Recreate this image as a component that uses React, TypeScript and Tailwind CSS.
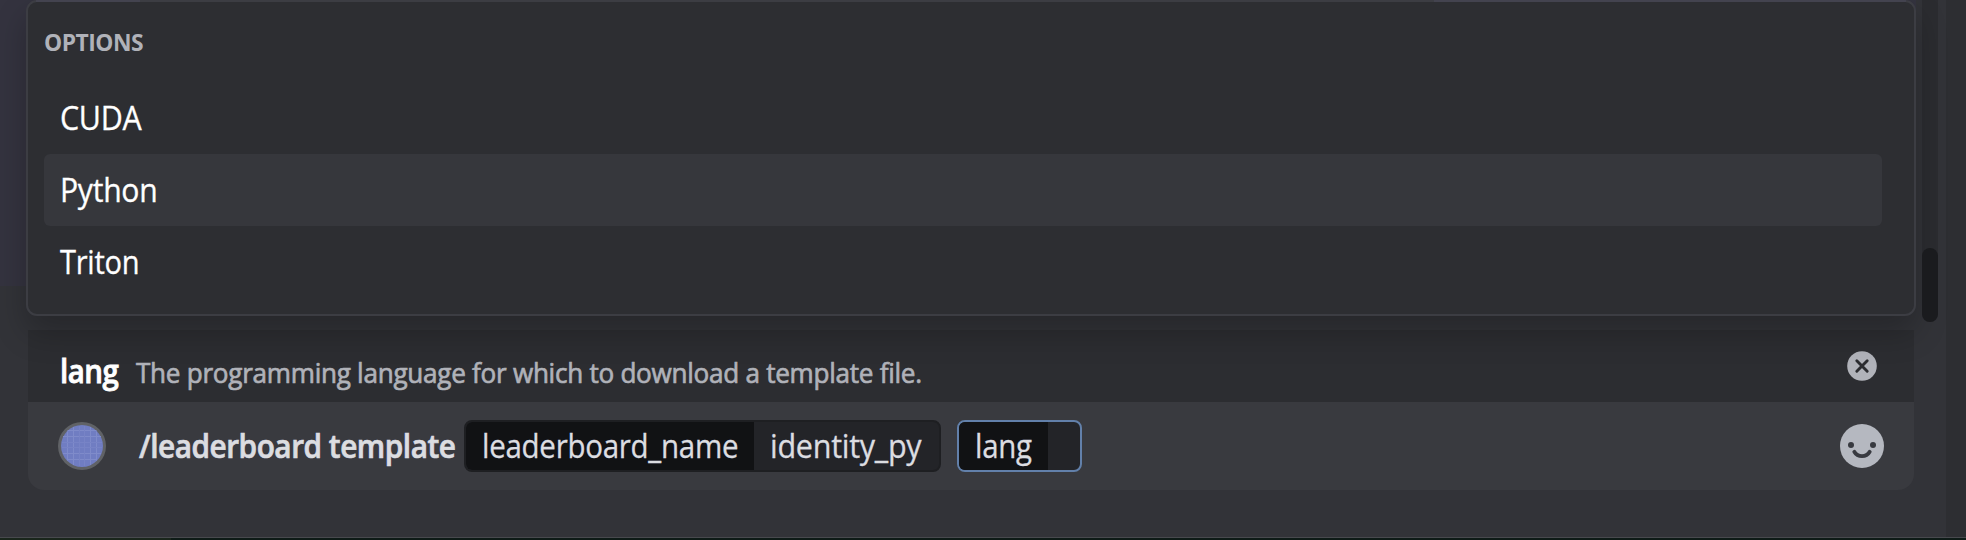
const options = [
  { name: "CUDA", text: "scale-x-[0.95]", row: "" },
  { name: "Python", text: "scale-x-[0.942]", row: "bg-[#36373c]" },
  { name: "Triton", text: "scale-x-[0.908]", row: "" },
];

function CloseIcon() {
  return (
    <svg width="30" height="30" viewBox="0 0 30 30" className="block">
      <circle cx="15" cy="15" r="14.8" fill="#b1b3ba" />
      <path d="M9.8 9.8 20.2 20.2M20.2 9.8 9.8 20.2" stroke="#2c2d31" strokeWidth="2.9" strokeLinecap="round" />
    </svg>
  );
}

function SmileIcon() {
  return (
    <svg width="44" height="44" viewBox="0 0 44 44" className="block">
      <circle cx="22" cy="22" r="22" fill="#b5b8c0" />
      <circle cx="11" cy="21" r="3" fill="#383a40" />
      <circle cx="33" cy="21" r="3" fill="#383a40" />
      <path d="M14.3 27.8C17.6 33.6 26.4 33.6 29.7 27.8" fill="none" stroke="#383a40" strokeWidth="3.8" strokeLinecap="round" />
    </svg>
  );
}

function Avatar() {
  return (
    <svg width="48" height="48" viewBox="0 0 48 48" className="block shrink-0">
      <circle cx="24" cy="24" r="24" fill="#606266" />
      <circle cx="24" cy="24" r="21" fill="#707dc2" />
      <path
        d="M9.5 9.5V38.5M15.5 5V43M32.5 5V43M38.5 9.5V38.5M9.5 8.5H38.5M5 14.5H43M5 31.5H43M9.5 37.5H38.5"
        stroke="#7f8bca"
        strokeWidth="1"
      />
      <path d="M21.5 4V44M26.5 4V44M4 20.5H44M4 25.5H44" stroke="#7783c6" strokeWidth="1" />
    </svg>
  );
}

function OptionList() {
  return (
    <div className="relative z-10 ml-[26px] h-[316px] w-[1890px] rounded-[11px] border-2 border-[#3c3d43] bg-[#2d2e32] pt-[25px] pl-4 shadow-[0_16px_32px_rgba(0,0,0,0.24)]">
      <div className="absolute -top-0.5 left-2 h-0.5 w-[104px] bg-[#43434f]" />
      <div className="absolute -top-0.5 right-2 h-0.5 w-[472px] bg-[#43434f]" />
      <div className="h-[55px] text-[24px] leading-[30px] font-bold tracking-[-0.5px] text-[#b0b2b9]">
        <span className="inline-block origin-left scale-x-[0.95]">OPTIONS</span>
      </div>
      <ul className="text-[32px] leading-10 tracking-[-0.3px] text-white">
        {options.map((o) => (
          <li key={o.name} className={`flex h-[72px] w-[1838px] items-center rounded-md pl-4 ${o.row}`}>
            <span className={`inline-block origin-left [-webkit-text-stroke:0.3px_currentColor] ${o.text}`}>{o.name}</span>
          </li>
        ))}
      </ul>
    </div>
  );
}

export default function App() {
  return (
    <div className="flex h-[540px] w-[1966px] flex-col overflow-hidden bg-[#323338] font-['Open_Sans',sans-serif] whitespace-nowrap">
      <div className="flex h-[537px]">
        <div className="relative w-[1946px]">
          <div className="absolute top-0 left-0 h-[286px] w-[1916px] bg-[#34333f]" />
          <div className="absolute top-0 left-[1922px] h-[322px] w-4 rounded-b-lg bg-[#2b2c30]" />
          <OptionList />
          <div className="absolute top-[248px] left-[1922px] z-20 h-[74px] w-4 rounded-full bg-[#1a1b1e]" />
          <div className="mt-[14px] ml-7 flex h-[72px] w-[1886px] items-center bg-[#2c2d31] pr-[37px] pl-8">
            <span className="w-[76px] pt-[10px] text-[32px] font-semibold tracking-[-0.5px] text-white">
              <span className="inline-block origin-left scale-x-[0.92] [-webkit-text-stroke:0.8px_currentColor]">lang</span>
            </span>
            <span className="grow pt-[12px] text-[28px] tracking-[-0.3px] text-[#b0b2b9]">
              <span className="inline-block origin-left scale-x-[0.933] [-webkit-text-stroke:0.7px_currentColor]">
                The programming language for which to download a template file.
              </span>
            </span>
            <CloseIcon />
          </div>
          <div className="ml-7 flex h-[88px] w-[1886px] items-center rounded-b-2xl bg-[#393a3f] pr-[30px] pl-[30px] text-[32px] text-[#dcdde1]">
            <Avatar />
            <span className="ml-[33px] w-[325px] shrink-0 font-semibold tracking-[-0.5px]">
              <span className="inline-block origin-left scale-x-[0.93] [-webkit-text-stroke:0.7px_currentColor]">/leaderboard template</span>
            </span>
            <span className="flex h-[52px] w-[477px] overflow-hidden rounded-lg border-2 border-[#1e1f22] bg-[#232428] leading-[48px] tracking-[-0.3px]">
              <span className="w-72 shrink-0 rounded-l-md bg-[#111214] pl-4">
                <span className="inline-block origin-left scale-x-[0.922] [-webkit-text-stroke:0.3px_currentColor]">leaderboard_name</span>
              </span>
              <span className="pl-4">
                <span className="inline-block origin-left scale-x-[0.955] [-webkit-text-stroke:0.3px_currentColor]">identity_py</span>
              </span>
            </span>
            <span className="ml-4 flex h-[52px] w-[125px] overflow-hidden rounded-lg border-2 border-[#6280aa] bg-[#232428] leading-[48px] tracking-[-0.3px]">
              <span className="w-[89px] bg-[#111214] pl-4">
                <span className="inline-block origin-left scale-x-[0.92] [-webkit-text-stroke:0.3px_currentColor]">lang</span>
              </span>
            </span>
            <span className="ml-auto">
              <SmileIcon />
            </span>
          </div>
        </div>
        <div className="w-5 bg-[#2d2e32]" />
      </div>
      <div className="h-px bg-[#48494e]" />
      <div className="flex h-0.5 bg-[#0e1b17]">
        <div className="w-[171px] bg-[#1a261c]" />
      </div>
    </div>
  );
}
